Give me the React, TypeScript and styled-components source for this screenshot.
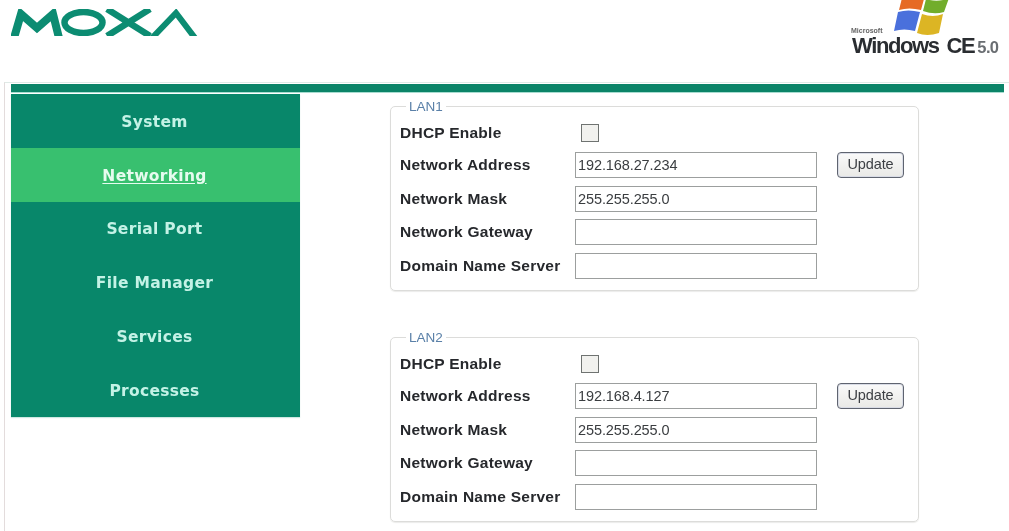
import React from "react";
import styled, { createGlobalStyle } from "styled-components";

const Global = createGlobalStyle`
  html, body { margin: 0; padding: 0; background: #fff; overflow: hidden; }
  #root { width: 1009px; height: 531px; overflow: hidden; }
  * { box-sizing: border-box; }
`;

const Page = styled.div`
  width: 1009px;
  height: 531px;
  background: #fff;
  filter: blur(0.6px);
`;

const Header = styled.header`
  height: 82px;
  display: flex;
  justify-content: space-between;
  padding: 9px 8px 0 11px;
`;

const MoxaLogo = styled.svg`
  display: block;
  width: 187px;
  height: 27px;
`;

const WindowsBrand = styled.div`
  margin-top: -9px;
  width: 150px;
  display: flex;
  flex-direction: column;
  position: relative;
`;

const Flag = styled.svg`
  display: block;
  width: 60px;
  height: 37px;
  margin-left: 43px;
`;

const Microsoft = styled.span`
  position: absolute;
  left: 0;
  top: 27px;
  font: 700 7px/8px "Liberation Sans", Arial, sans-serif;
  color: #666;
`;

const WindowsLine = styled.div`
  margin-top: -1px;
  display: flex;
  align-items: baseline;
  font-family: "Liberation Sans", Arial, sans-serif;
  line-height: 20px;
  color: #2a2d31;
  white-space: nowrap;
`;

const WindowsWord = styled.span`
  font-size: 22px;
  font-weight: 700;
  letter-spacing: -1.4px;
  margin: 0 8px 0 1px;
`;

const CeWord = styled.span`
  font-size: 22px;
  font-weight: 700;
  letter-spacing: -1.4px;
  margin-right: 3px;
`;

const Version = styled.span`
  font-size: 16.5px;
  font-weight: 700;
  letter-spacing: -0.6px;
  color: #6a6e72;
`;

const Frame = styled.div`
  height: 449px;
  padding: 1px 5px 0 6px;
  margin-left: 4px;
  border-left: 1px solid #e3dcdc;
  border-top: 1px solid #dfeae6;
`;

const TopBar = styled.div`
  height: 8px;
  background: #0b8468;
  box-shadow: 0 1px 0 #a8dcd0;
`;

const Columns = styled.div`
  display: flex;
  align-items: flex-start;
  margin-top: 2px;
`;

const Sidebar = styled.nav`
  width: 289px;
  flex: none;
  background: #08876a;
  box-shadow: 0 1px 1px #cfe8e2;
`;

const MenuItem = styled.a<{ $active?: boolean }>`
  display: flex;
  align-items: center;
  justify-content: center;
  height: 53.8px;
  padding: 2px 2px 0 0;
  font: 700 15.5px "DejaVu Sans", Verdana, sans-serif;
  letter-spacing: 0.3px;
  color: ${(p) => (p.$active ? "#e6fbef" : "#c4f2e6")};
  background: ${(p) => (p.$active ? "#38c06f" : "transparent")};
  text-decoration: ${(p) => (p.$active ? "underline" : "none")};
  text-underline-offset: 2px;
`;

const Content = styled.main`
  margin-left: 90px;
  width: 529px;
  padding-top: 12px;
  display: flex;
  flex-direction: column;
  gap: 46px;
`;

const Group = styled.fieldset`
  position: relative;
  margin: 0;
  padding: 17px 14px 12px 9px;
  height: 185px;
  border: 1px solid #dcdcda;
  border-radius: 5px;
  box-shadow: 0 1px 1px #ececea;
`;

const GroupTitle = styled.legend`
  position: absolute;
  top: -7px;
  left: 15px;
  padding: 0 3px;
  background: #fff;
  font: 400 13.5px/14px "Liberation Sans", Arial, sans-serif;
  color: #5a80a8;
`;

const Fields = styled.div`
  display: grid;
  grid-template-columns: 175px 242px 87px;
  row-gap: 7.67px;
  align-items: center;
`;

const FieldLabel = styled.label`
  grid-column: 1;
  font: 700 15.5px/26px "Liberation Sans", Arial, sans-serif;
  letter-spacing: 0.25px;
  color: #26282c;
  white-space: nowrap;
`;

const CheckLabel = styled(FieldLabel)`
  line-height: 18px;
  margin-bottom: 2.5px;
`;

const TextBox = styled.input`
  grid-column: 2;
  width: 242px;
  height: 26px;
  padding: 0 2px;
  border: 1px solid #9c9f9e;
  border-radius: 0;
  background: #fff;
  outline: none;
  font: 400 14.5px "Liberation Sans", Arial, sans-serif;
  letter-spacing: -0.1px;
  color: #3a3d40;
`;

const CheckBox = styled.input`
  grid-column: 2;
  appearance: none;
  width: 18px;
  height: 18px;
  margin: 0 0 2.5px 6px;
  border: 1px solid #6f7371;
  background: #f1f1ee;
`;

const UpdateButton = styled.button`
  grid-column: 3;
  justify-self: end;
  width: 67px;
  height: 26px;
  padding: 0 0 2px;
  border: 1px solid #5f6470;
  border-radius: 4px;
  background: linear-gradient(#fafafa, #e9e9e6);
  box-shadow: inset 0 0 0 1px #d9dce6;
  font: 400 14.5px "Liberation Sans", Arial, sans-serif;
  letter-spacing: -0.1px;
  color: #3c3f44;
`;

const lans = [
  { name: "LAN1", address: "192.168.27.234" },
  { name: "LAN2", address: "192.168.4.127" },
];

const menu = ["System", "Networking", "Serial Port", "File Manager", "Services", "Processes"];

function LanGroup({ name, address }: { name: string; address: string }) {
  return (
    <Group>
      <GroupTitle>{name}</GroupTitle>
      <Fields>
        <CheckLabel>DHCP Enable</CheckLabel>
        <CheckBox type="checkbox" readOnly />
        <span />
        <FieldLabel>Network Address</FieldLabel>
        <TextBox defaultValue={address} />
        <UpdateButton type="button">Update</UpdateButton>
        <FieldLabel>Network Mask</FieldLabel>
        <TextBox defaultValue="255.255.255.0" />
        <span />
        <FieldLabel>Network Gateway</FieldLabel>
        <TextBox defaultValue="" />
        <span />
        <FieldLabel>Domain Name Server</FieldLabel>
        <TextBox defaultValue="" />
      </Fields>
    </Group>
  );
}

export default function App() {
  return (
    <Page>
      <Global />
      <Header>
        <MoxaLogo viewBox="0 0 187 27" role="img" aria-label="MOXA logo">
          <g fill="none" stroke="#0c8c72" strokeLinejoin="miter">
            <path d="M3 29 L10 5 L26 19 L42 5 L48 29" strokeWidth="8" />
            <ellipse cx="72.5" cy="13.5" rx="19" ry="10.5" strokeWidth="6.5" />
            <path d="M96 0 L139 27 M139 0 L96 27" strokeWidth="6.5" />
            <path d="M141 29 L165 4 L184 29" strokeWidth="6" />
          </g>
        </MoxaLogo>
        <WindowsBrand>
          <Flag viewBox="0 0 60 37">
            <path d="M8 -2 Q18 -6 30 -1 L27 10 Q15 7 5 10 Z" fill="#e66a24" />
            <path d="M32 -1 Q44 3 55 -2 L50 12 Q40 15 29 11 Z" fill="#72ad2c" />
            <path d="M4 12 Q14 9 26 12 L21 31 Q10 28 0 31 Z" fill="#4a70dc" />
            <path d="M28 14 Q39 18 49 14 L45 33 Q33 37 23 33 Z" fill="#dcb524" />
          </Flag>
          <Microsoft>Microsoft</Microsoft>
          <WindowsLine>
            <WindowsWord>Windows</WindowsWord>
            <CeWord>CE</CeWord>
            <Version>5.0</Version>
          </WindowsLine>
        </WindowsBrand>
      </Header>
      <Frame>
        <TopBar />
        <Columns>
          <Sidebar>
            {menu.map((m) => (
              <MenuItem key={m} $active={m === "Networking"}>
                {m}
              </MenuItem>
            ))}
          </Sidebar>
          <Content>
            {lans.map((l) => (
              <LanGroup key={l.name} {...l} />
            ))}
          </Content>
        </Columns>
      </Frame>
    </Page>
  );
}
